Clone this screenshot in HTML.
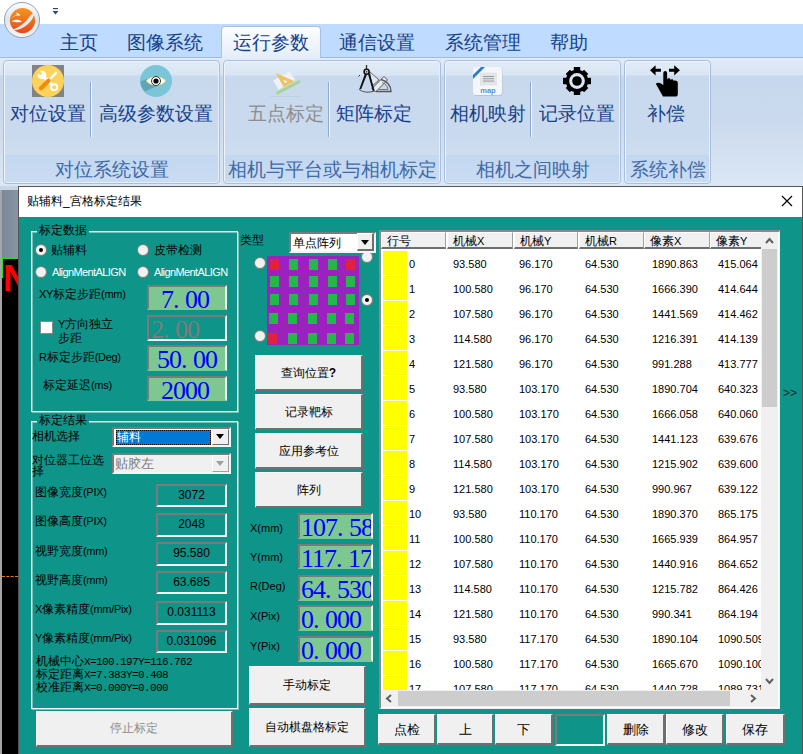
<!DOCTYPE html>
<html><head><meta charset="utf-8">
<style>
*{margin:0;padding:0;box-sizing:border-box}
html,body{width:803px;height:754px;overflow:hidden;background:#fff;font-family:"Liberation Sans",sans-serif}
.a{position:absolute}
.t{position:absolute;white-space:nowrap;line-height:1}
/* top */
#tabbar{left:0;top:24px;width:803px;height:34px;background:#bfdbff}
.tab{position:absolute;top:33px;font-size:19px;color:#15428b;line-height:20px}
#seltab{left:221px;top:26px;width:100px;height:32px;border:1px solid #a9c2e2;border-bottom:none;border-radius:4px 4px 0 0;background:linear-gradient(#fdfeff,#e4edf8)}
#ribbon{left:0;top:57px;width:803px;height:129px;background:linear-gradient(#e2ebf7 0,#d8e4f3 17px,#c6d7ed 18px,#cbdaee 50%,#dbe7f5 100%);border-top:1px solid #9fbbe0}
.grp{position:absolute;top:60px;height:124px;border:1px solid #a9c0dc;border-radius:4px;box-shadow:inset 1px 1px 0 #eef4fb,inset -1px -1px 0 #e6eef8;background:linear-gradient(#e3ecf8 0,#d9e5f4 14px,#c8d9ee 15px,#cadaee 60%,#d3e1f2 100%)}
.glab{position:absolute;left:1px;right:1px;bottom:1px;height:27px;background:linear-gradient(#c3d7f0,#c9dcf3);text-align:center;font-size:19px;line-height:30px;color:#3e6aa8;border-radius:0 0 3px 3px}
.rb{position:absolute;top:103px;font-size:19px;color:#15428b;line-height:22px}
.sep{position:absolute;top:82px;width:2px;height:55px;background:linear-gradient(90deg,#8da9d0 50%,#f4f8fd 50%)}
/* dialog */
#dlg{left:18px;top:186px;width:785px;height:570px;background:#0f9489;border:1px solid #555}
#dtitle{left:19px;top:187px;width:783px;height:30px;background:#fff}
.gbox{position:absolute;border:1px solid #f2f6f6;box-shadow:inset 1px 1px 0 #7fbdb6,1px 1px 0 #7fbdb6}
.lbl{position:absolute;font-size:12px;color:#000;line-height:13px;white-space:nowrap}
.radio{position:absolute;width:12px;height:12px;border-radius:50%;background:#f1f1f1;border:1px solid #7a7a7a}
.radio.on::after{content:"";position:absolute;left:3px;top:3px;width:4px;height:4px;border-radius:50%;background:#000}
.gtb{position:absolute;background:#7dc790;border-top:2px solid #7a7a7a;border-left:2px solid #7a7a7a;border-bottom:2px solid #f4f4f4;border-right:2px solid #f4f4f4;color:#0000ff;font-family:"Liberation Serif",serif;font-size:26px;line-height:25px;letter-spacing:-1px;overflow:hidden;white-space:nowrap}
.ttb{position:absolute;background:#0f9489;border-top:2px solid #7a7a7a;border-left:2px solid #7a7a7a;border-bottom:2px solid #f4f4f4;border-right:2px solid #f4f4f4;color:#000;font-size:12px;text-align:center;line-height:19px}
.n{font-size:11px;letter-spacing:-0.3px}
.m{font-family:"Liberation Mono",monospace;font-size:11px;letter-spacing:-0.6px}
.gtb i{font-style:normal;letter-spacing:5.5px}
.gtb.g{border-bottom-color:#7dc790}
.btn{position:absolute;background:#f0f0f0;border:1px solid #fff;border-right:2px solid #6f6f6f;border-bottom:2px solid #6f6f6f;font-size:12px;color:#000;text-align:center}
</style></head><body>
<!-- top white bar -->
<div class="a" id="tabbar"></div>
<div class="a" id="ribbon"></div>
<div class="a" id="seltab"></div>
<div class="tab" style="left:60px">主页</div>
<div class="tab" style="left:127px">图像系统</div>
<div class="tab" style="left:233px">运行参数</div>
<div class="tab" style="left:339px">通信设置</div>
<div class="tab" style="left:445px">系统管理</div>
<div class="tab" style="left:550px">帮助</div>

<div class="grp" style="left:3px;width:217px"><div class="glab">对位系统设置</div></div>
<div class="grp" style="left:223px;width:218px"><div class="glab">相机与平台或与相机标定</div></div>
<div class="grp" style="left:444px;width:177px"><div class="glab">相机之间映射</div></div>
<div class="grp" style="left:624px;width:87px"><div class="glab">系统补偿</div></div>

<div class="rb" style="left:10px">对位设置</div>
<div class="sep" style="left:90px"></div>
<div class="rb" style="left:99px">高级参数设置</div>
<div class="rb" style="left:248px;color:#8d8d8d">五点标定</div>
<div class="sep" style="left:328px"></div>
<div class="rb" style="left:336px">矩阵标定</div>
<div class="rb" style="left:450px">相机映射</div>
<div class="sep" style="left:530px"></div>
<div class="rb" style="left:539px">记录位置</div>
<div class="rb" style="left:647px">补偿</div>


<!-- orb -->
<svg class="a" style="left:0;top:0" width="44" height="42" viewBox="0 0 44 42">
<defs>
<linearGradient id="og" x1="0" y1="0" x2="0" y2="1"><stop offset="0" stop-color="#f7961e"/><stop offset="1" stop-color="#e5481c"/></linearGradient>
<linearGradient id="ring" x1="0" y1="0" x2="0" y2="1"><stop offset="0" stop-color="#fbfcfd"/><stop offset="0.5" stop-color="#dfe5ec"/><stop offset="1" stop-color="#f4f6f8"/></linearGradient>
</defs>
<circle cx="22" cy="20" r="17.6" fill="url(#ring)" stroke="#8796aa" stroke-width="0.9"/>
<circle cx="22.5" cy="20.6" r="12.6" fill="url(#og)"/>
<path d="M12.5 30 C19 27 24 24 28 18.5 C30 15.5 32 13.5 35 12.5 C34 16.5 31.5 21 28 24 C23.5 28 18 30.5 12.5 30Z" fill="#ececec"/>
<path d="M10.3 21 C11.5 17 15.5 14.8 20.5 15.8 C19.5 14 18 13 16 12.8 L17.2 14.8 C14 15.5 11.5 17.5 10.3 21Z" fill="#fff"/>
<path d="M11.5 21.2 C14.5 19.2 19 19 22 21.5 C20.5 22.5 15 22.5 11.5 21.2Z" fill="#fff"/>
</svg>
<svg class="a" style="left:52px;top:8px" width="8" height="8" viewBox="0 0 8 8"><rect x="1" y="0" width="5" height="1.2" fill="#2a4a7a"/><path d="M0.5 3 L6.5 3 L3.5 6.5Z" fill="#2a4a7a"/></svg>

<!-- wrench icon -->
<svg class="a" style="left:32px;top:65px" width="32" height="32" viewBox="0 0 32 32">
<rect width="32" height="32" fill="#838383"/>
<circle cx="16" cy="16" r="16" fill="#fdd35b"/>
<path d="M10.5 10.5 L21.5 21.5" stroke="#fff" stroke-width="3.2"/>
<circle cx="10" cy="10" r="4.3" fill="#fff"/>
<path d="M6.5 4.5 L10.2 8.2 L8.2 10.2 L4.5 6.5Z" fill="#fdd35b"/>
<circle cx="22.2" cy="22.2" r="3.9" fill="#fff"/>
<circle cx="22.2" cy="22.2" r="2" fill="#fdd35b"/>
<path d="M24.8 7.2 L16.5 15.5" stroke="#fff" stroke-width="2.4"/>
<path d="M16.5 15.8 L9 23.3" stroke="#f28a0e" stroke-width="4.2" stroke-linecap="round"/>
</svg>
<!-- eye icon -->
<svg class="a" style="left:140px;top:65px" width="32" height="32" viewBox="0 0 32 32">
<circle cx="16" cy="16" r="16" fill="#7bc5d9"/>
<path d="M0.5 16.5 L7 14 L16 21.5 L5 26.5 C2 23.5 0.5 20 0.5 16.5Z" fill="#5fa5b8"/>
<path d="M6.5 16 C10 10.5 22 10.5 25.5 16 C22 21.5 10 21.5 6.5 16Z" fill="#fff" stroke="#f0e860" stroke-width="0.8"/>
<circle cx="16" cy="16" r="4.5" fill="#fff" stroke="#333" stroke-width="1"/>
<circle cx="16" cy="16" r="2.6" fill="#000"/>
</svg>
<!-- triangle ruler (disabled) -->
<svg class="a" style="left:266px;top:64px" width="40" height="36" viewBox="0 0 40 36">
<path d="M7 16.4 L23.9 6.5 L29.4 15.9 L12.5 25.9Z" fill="#eef2f7" stroke="#d6dde6" stroke-width="0.6"/>
<path d="M9.7 9 L28.4 17.2 L17.7 22.9Z" fill="#ecc35e"/>
<path d="M17.2 15.7 L21.7 17.4 L18.9 19.2Z" fill="#eef2f7"/>
<path d="M11.5 28.9 L33.1 17.7" stroke="#a6d68c" stroke-width="2.8" stroke-linecap="round"/>
<path d="M4 32.4 L36 32.4" stroke="#b9c8da" stroke-width="0.8" opacity="0.6"/>
</svg>
<!-- compass -->
<svg class="a" style="left:355px;top:63px" width="40" height="32" viewBox="0 0 40 32">
<path d="M14.5 8.5 L24 17 L17 23Z" stroke="#666" stroke-width="1" fill="#dfe7f1"/>
<path d="M17 25.5 L29 13.5 L32.5 17 L20.5 29Z" stroke="#555" stroke-width="1" fill="#e6ecf3"/>
<path d="M21 28.5 L36 28.5 A 13 12 0 0 0 26 16.5" stroke="#555" stroke-width="1.4" fill="none"/>
<path d="M24 26.5 L33 26.5 A 9 8.5 0 0 0 27 19.5" stroke="#777" stroke-width="1" fill="none"/>
<path d="M11.5 2 L11.5 6" stroke="#333" stroke-width="1.3"/>
<path d="M10 10.5 L12.2 11 L6.2 26 L4.2 26.5Z" fill="#111"/>
<path d="M13 11 L14.8 10.5 L19.6 27.5 L17.8 28Z" fill="#111"/>
<path d="M4.2 26.5 Q 10 31 19.6 28" stroke="#555" stroke-width="1" fill="none"/>
<circle cx="11.6" cy="8.8" r="2.5" stroke="#111" stroke-width="1.6" fill="#fff"/>
<circle cx="11.6" cy="8.8" r="0.9" fill="#111"/>
<path d="M3.5 13.5 L5 12" stroke="#333" stroke-width="1"/>
</svg>
<!-- map icon -->
<svg class="a" style="left:472px;top:66px" width="32" height="31" viewBox="0 0 32 31">
<rect x="1.5" y="1.5" width="29" height="28.5" rx="3" fill="#b9c2cc"/>
<rect x="1" y="1" width="29" height="28" rx="3" fill="#f5f6f8"/>
<path d="M1 9 L9 1 L13 1 L1 13Z" fill="#2a7bd0"/>
<rect x="8" y="6.5" width="17" height="13" fill="#e3e5e8"/>
<rect x="11" y="10" width="11" height="0.9" fill="#8a9494"/>
<rect x="11" y="12.3" width="11" height="0.9" fill="#8a9494"/>
<rect x="11" y="14.6" width="11" height="0.9" fill="#8a9494"/>
<text x="16" y="26.5" font-size="7.5" fill="#5a8fdc" text-anchor="middle" font-family="Liberation Sans" font-weight="bold">map</text>
</svg>
<!-- gear -->
<svg class="a" style="left:562px;top:66px" width="30" height="30" viewBox="0 0 30 30">
<g fill="#000">
<circle cx="15" cy="15" r="11.2"/>
<rect x="11.8" y="1" width="6.4" height="28"/>
<rect x="1" y="11.8" width="28" height="6.4"/>
<rect x="12" y="2" width="6" height="26" transform="rotate(45 15 15)"/>
<rect x="12" y="2" width="6" height="26" transform="rotate(-45 15 15)"/>
</g>
<circle cx="15" cy="15" r="7.9" fill="#dbe5f2"/>
<circle cx="15" cy="15" r="4.8" fill="#000"/>
</svg>
<!-- hand -->
<svg class="a" style="left:649px;top:64px" width="32" height="34" viewBox="0 0 32 34">
<path d="M1 6.3 L6.6 1.3 L6.6 4.7 L11.9 4.7 L11.9 7.8 L6.6 7.8 L6.6 11.6Z" fill="#000"/>
<path d="M30.9 6.3 L25.2 1.3 L25.2 4.7 L20 4.7 L20 7.8 L25.2 7.8 L25.2 11.6Z" fill="#000"/>
<path d="M14.3 8.9 C14.3 6.2 18.1 6.2 18.1 8.9 L18.1 15.5 C18.6 14 21.2 13.8 21.4 15.8 C22 14.8 24.6 14.8 24.7 17 C25.3 16.2 28.8 16.3 28.8 19 L28.8 30.5 C28.8 31.8 27.8 32.6 26.3 32.6 L14 32.6 L6.8 19.8 C8.5 18 12 18.5 14.3 21.3 Z" fill="#000"/>
</svg>
<!-- dialog -->
<div class="a" id="dlg"></div>
<div class="a" id="dtitle"></div>
<div class="lbl" style="left:27px;top:195px">贴辅料_宫格标定结果</div>


<!-- left strip -->
<div class="a" style="left:0;top:186px;width:18px;height:568px;overflow:hidden;background:#c9d5e3">
<div class="a" style="left:0;top:4px;width:2px;height:564px;background:#a4a6a8"></div>
<div class="a" style="left:2px;top:4px;width:16px;height:68px;background:linear-gradient(90deg,#7b8897,#8795a4)"></div>
<div class="a" style="left:2px;top:72px;width:16px;height:496px;background:#000"></div>
<div class="a" style="left:2px;top:72px;width:16px;height:1px;background:#22e022"></div>
<div class="a" style="left:2px;top:72px;width:1px;height:20px;background:#22e022"></div>
<div class="t" style="left:3px;top:75px;font-size:36px;font-weight:bold;color:#f00">N</div>
<div class="a" style="left:2px;top:390px;width:16px;height:0;border-top:1px dashed #e07a10"></div>
</div>

<!-- group box 1 -->
<div class="gbox" style="left:31px;top:231px;width:207px;height:181px"></div>
<div class="lbl" style="left:37px;top:224px;background:#0f9489;padding:0 2px">标定数据</div>
<div class="radio on" style="left:35px;top:244px"></div>
<div class="lbl" style="left:51px;top:244px">贴辅料</div>
<div class="radio" style="left:137px;top:244px"></div>
<div class="lbl" style="left:154px;top:244px">皮带检测</div>
<div class="radio" style="left:35px;top:266px"></div>
<div class="lbl" style="left:52px;top:266px;color:#fff;font-size:11px;letter-spacing:-0.6px;width:74px;overflow:hidden">AlignMentALIGN</div>
<div class="radio" style="left:137px;top:266px"></div>
<div class="lbl" style="left:154px;top:266px;color:#fff;font-size:11px;letter-spacing:-0.6px;width:74px;overflow:hidden">AlignMentALIGN</div>
<div class="lbl" style="left:39px;top:288px"><span class="n">XY</span>标定步距<span class="n">(mm)</span></div>
<div class="gtb g" style="left:147px;top:285px;width:80px;height:25px;padding-left:12px">7<i>.</i>00</div>
<div class="a" style="left:40px;top:321px;width:13px;height:13px;background:#fff;border:1px solid #8a8a8a"></div>
<div class="lbl" style="left:58px;top:318px"><span class="n">Y</span>方向独立</div>
<div class="lbl" style="left:58px;top:332px">步距</div>
<div class="gtb" style="left:147px;top:315px;width:80px;height:26px;padding-left:2px;background:#0f9489;color:#7c7c7c">2<i>.</i>00</div>
<div class="lbl" style="left:39px;top:351px"><span class="n">R</span>标定步距<span class="n">(Deg)</span></div>
<div class="gtb g" style="left:147px;top:345px;width:80px;height:26px;padding-left:8px">50<i>.</i>00</div>
<div class="lbl" style="left:43px;top:379px">标定延迟<span class="n">(ms)</span></div>
<div class="gtb g" style="left:147px;top:376px;width:80px;height:25px;padding-left:12px">2000</div>

<!-- group box 2 -->
<div class="gbox" style="left:31px;top:421px;width:207px;height:288px"></div>
<div class="lbl" style="left:37px;top:414px;background:#0f9489;padding:0 2px">标定结果</div>
<div class="lbl" style="left:32px;top:430px">相机选择</div>
<div class="a" style="left:112px;top:427px;width:119px;height:20px;background:#fff;border-top:2px solid #7a7a7a;border-left:2px solid #7a7a7a;border-bottom:2px solid #f4f4f4;border-right:2px solid #f4f4f4"></div>
<div class="a" style="left:116px;top:430px;width:95px;height:15px;background:#0078d7;border:1px dotted #000"></div>
<div class="lbl" style="left:117px;top:431px;color:#fff">辅料</div>
<div class="a" style="left:212px;top:429px;width:17px;height:16px;background:#f0f0f0;border:1px solid #fff;border-right:1px solid #6f6f6f;border-bottom:1px solid #6f6f6f"></div>
<div class="t" style="left:216px;top:434px;width:0;height:0;border-left:4px solid transparent;border-right:4px solid transparent;border-top:5px solid #000"></div>
<div class="lbl" style="left:32px;top:454px">对位器工位选</div>
<div class="lbl" style="left:32px;top:466px;line-height:11px">择</div>
<div class="a" style="left:112px;top:453px;width:119px;height:21px;background:#f0f0f0;border-top:2px solid #7a7a7a;border-left:2px solid #7a7a7a;border-bottom:2px solid #f4f4f4;border-right:2px solid #f4f4f4"></div>
<div class="lbl" style="left:115px;top:457px;color:#7a7a7a;font-size:13px">贴胶左</div>
<div class="a" style="left:212px;top:455px;width:17px;height:17px;background:#f0f0f0;border:1px solid #fff;border-right:1px solid #a0a0a0;border-bottom:1px solid #a0a0a0"></div>
<div class="t" style="left:216px;top:461px;width:0;height:0;border-left:4px solid transparent;border-right:4px solid transparent;border-top:5px solid #a0a0a0"></div>

<div class="lbl" style="left:35px;top:486px">图像宽度<span class="n">(PIX)</span></div>
<div class="ttb" style="left:156px;top:484px;width:71px;height:23px">3072</div>
<div class="lbl" style="left:35px;top:515px">图像高度<span class="n">(PIX)</span></div>
<div class="ttb" style="left:156px;top:513px;width:71px;height:24px">2048</div>
<div class="lbl" style="left:35px;top:545px">视野宽度<span class="n">(mm)</span></div>
<div class="ttb" style="left:156px;top:542px;width:71px;height:24px">95.580</div>
<div class="lbl" style="left:35px;top:574px">视野高度<span class="n">(mm)</span></div>
<div class="ttb" style="left:156px;top:571px;width:71px;height:23px">63.685</div>
<div class="lbl" style="left:35px;top:603px"><span class="n">X</span>像素精度<span class="n">(mm/Pix)</span></div>
<div class="ttb" style="left:156px;top:601px;width:71px;height:24px">0.031113</div>
<div class="lbl" style="left:35px;top:632px"><span class="n">Y</span>像素精度<span class="n">(mm/Pix)</span></div>
<div class="ttb" style="left:156px;top:630px;width:71px;height:23px">0.031096</div>
<div class="lbl" style="left:36px;top:655px;font-size:12px">机械中心<span class="m">X=100.197Y=116.762</span></div>
<div class="lbl" style="left:36px;top:668px;font-size:12px">标定距离<span class="m">X=7.383Y=0.408</span></div>
<div class="lbl" style="left:36px;top:681px;font-size:12px">校准距离<span class="m">X=0.000Y=0.000</span></div>
<div class="btn" style="left:36px;top:711px;width:197px;height:36px;color:#8c8c8c;line-height:33px">停止标定</div>


<!-- center column -->
<div class="radio" style="left:361px;top:251px"></div>
<div class="lbl" style="left:240px;top:234px">类型</div>
<div class="a" style="left:289px;top:232px;width:87px;height:21px;background:#fff;border-top:2px solid #7a7a7a;border-left:2px solid #7a7a7a;border-bottom:2px solid #f4f4f4;border-right:2px solid #f4f4f4"></div>
<div class="lbl" style="left:293px;top:237px;font-size:12px">单点阵列</div>
<div class="a" style="left:357px;top:233px;width:17px;height:18px;background:#f0f0f0;border:1px solid #fff;border-right:2px solid #6f6f6f;border-bottom:2px solid #6f6f6f"></div>
<div class="t" style="left:361px;top:240px;width:0;height:0;border-left:4px solid transparent;border-right:4px solid transparent;border-top:5px solid #000"></div>
<div class="a" style="left:267px;top:256px;width:92px;height:89px;background:#9b22bf"></div>
<div class="a" style="left:270px;top:259px;width:9px;height:11px;background:#e0213f"></div><div class="a" style="left:289px;top:259px;width:9px;height:11px;background:#22b84a"></div><div class="a" style="left:309px;top:259px;width:9px;height:11px;background:#22b84a"></div><div class="a" style="left:328px;top:259px;width:9px;height:11px;background:#22b84a"></div><div class="a" style="left:346px;top:259px;width:9px;height:11px;background:#e0213f"></div><div class="a" style="left:270px;top:276px;width:9px;height:11px;background:#22b84a"></div><div class="a" style="left:289px;top:276px;width:9px;height:11px;background:#22b84a"></div><div class="a" style="left:309px;top:276px;width:9px;height:11px;background:#22b84a"></div><div class="a" style="left:328px;top:276px;width:9px;height:11px;background:#22b84a"></div><div class="a" style="left:346px;top:276px;width:9px;height:11px;background:#22b84a"></div><div class="a" style="left:270px;top:294px;width:9px;height:11px;background:#22b84a"></div><div class="a" style="left:289px;top:294px;width:9px;height:11px;background:#22b84a"></div><div class="a" style="left:309px;top:294px;width:9px;height:11px;background:#22b84a"></div><div class="a" style="left:328px;top:294px;width:9px;height:11px;background:#22b84a"></div><div class="a" style="left:346px;top:294px;width:9px;height:11px;background:#22b84a"></div><div class="a" style="left:269px;top:313px;width:9px;height:11px;background:#22b84a"></div><div class="a" style="left:288px;top:313px;width:9px;height:11px;background:#22b84a"></div><div class="a" style="left:308px;top:313px;width:9px;height:11px;background:#22b84a"></div><div class="a" style="left:327px;top:313px;width:9px;height:11px;background:#22b84a"></div><div class="a" style="left:345px;top:313px;width:9px;height:11px;background:#22b84a"></div><div class="a" style="left:268px;top:333px;width:9px;height:11px;background:#e0213f"></div><div class="a" style="left:288px;top:333px;width:9px;height:11px;background:#22b84a"></div><div class="a" style="left:308px;top:333px;width:9px;height:11px;background:#22b84a"></div><div class="a" style="left:327px;top:333px;width:9px;height:11px;background:#22b84a"></div><div class="a" style="left:345px;top:333px;width:9px;height:11px;background:#22b84a"></div>
<div class="radio" style="left:254px;top:257px"></div>
<div class="radio" style="left:254px;top:330px"></div>
<div class="radio on" style="left:361px;top:294px"></div>

<div class="btn" style="left:255px;top:355px;width:108px;height:36px;line-height:35px">查询位置<b>?</b></div>
<div class="btn" style="left:255px;top:394px;width:108px;height:36px;line-height:35px">记录靶标</div>
<div class="btn" style="left:255px;top:433px;width:108px;height:36px;line-height:35px">应用参考位</div>
<div class="btn" style="left:255px;top:472px;width:108px;height:36px;line-height:35px">阵列</div>

<div class="lbl" style="left:250px;top:522px;font-size:11px">X(mm)</div>
<div class="gtb g" style="left:298px;top:513px;width:75px;height:26px;padding-left:1px">107<i>.</i>58</div>
<div class="lbl" style="left:250px;top:551px;font-size:11px">Y(mm)</div>
<div class="gtb g" style="left:298px;top:544px;width:75px;height:25px;padding-left:1px">117<i>.</i>17</div>
<div class="lbl" style="left:250px;top:580px;font-size:11px">R(Deg)</div>
<div class="gtb g" style="left:298px;top:575px;width:75px;height:26px;padding-left:1px">64<i>.</i>530</div>
<div class="lbl" style="left:250px;top:610px;font-size:11px">X(Pix)</div>
<div class="gtb g" style="left:298px;top:605px;width:75px;height:26px;padding-left:1px">0<i>.</i>000</div>
<div class="lbl" style="left:250px;top:640px;font-size:11px">Y(Pix)</div>
<div class="gtb g" style="left:298px;top:636px;width:75px;height:26px;padding-left:1px">0<i>.</i>000</div>
<div class="btn" style="left:249px;top:666px;width:117px;height:39px;line-height:37px">手动标定</div>
<div class="btn" style="left:249px;top:708px;width:117px;height:39px;line-height:37px">自动棋盘格标定</div>

<!-- table -->
<div class="a" style="left:379px;top:230px;width:401px;height:479px;background:#fff;border-top:2px solid #8a8a8a;border-left:2px solid #8a8a8a;border-bottom:1px solid #f0f0f0;border-right:1px solid #f0f0f0"></div>
<div class="a" style="left:381px;top:232px;width:380px;height:458px;overflow:hidden">
<div class="a" style="left:0px;top:0;width:65px;height:17px;background:#f0f0f0;border:1px solid #fff;border-right:1px solid #a0a0a0;border-bottom:2px solid #6e6e6e"></div><div class="lbl" style="left:6px;top:3px">行号</div><div class="a" style="left:66px;top:0;width:66px;height:17px;background:#f0f0f0;border:1px solid #fff;border-right:1px solid #a0a0a0;border-bottom:2px solid #6e6e6e"></div><div class="lbl" style="left:72px;top:3px">机械<span class="n">X</span></div><div class="a" style="left:133px;top:0;width:64px;height:17px;background:#f0f0f0;border:1px solid #fff;border-right:1px solid #a0a0a0;border-bottom:2px solid #6e6e6e"></div><div class="lbl" style="left:139px;top:3px">机械<span class="n">Y</span></div><div class="a" style="left:198px;top:0;width:65px;height:17px;background:#f0f0f0;border:1px solid #fff;border-right:1px solid #a0a0a0;border-bottom:2px solid #6e6e6e"></div><div class="lbl" style="left:204px;top:3px">机械<span class="n">R</span></div><div class="a" style="left:263px;top:0;width:66px;height:17px;background:#f0f0f0;border:1px solid #fff;border-right:1px solid #a0a0a0;border-bottom:2px solid #6e6e6e"></div><div class="lbl" style="left:269px;top:3px">像素<span class="n">X</span></div><div class="a" style="left:329px;top:0;width:66px;height:17px;background:#f0f0f0;border:1px solid #fff;border-right:1px solid #a0a0a0;border-bottom:2px solid #6e6e6e"></div><div class="lbl" style="left:335px;top:3px">像素<span class="n">Y</span></div><div class="a" style="left:2px;top:19px;width:24px;height:24px;background:#ff0"></div><div class="lbl" style="left:28px;top:26px;font-size:11px">0</div><div class="lbl" style="left:72px;top:26px;font-size:11px">93.580</div><div class="lbl" style="left:138px;top:26px;font-size:11px">96.170</div><div class="lbl" style="left:204px;top:26px;font-size:11px">64.530</div><div class="lbl" style="left:271px;top:26px;font-size:11px">1890.863</div><div class="lbl" style="left:337px;top:26px;font-size:11px">415.064</div><div class="a" style="left:2px;top:44px;width:24px;height:24px;background:#ff0"></div><div class="lbl" style="left:28px;top:51px;font-size:11px">1</div><div class="lbl" style="left:72px;top:51px;font-size:11px">100.580</div><div class="lbl" style="left:138px;top:51px;font-size:11px">96.170</div><div class="lbl" style="left:204px;top:51px;font-size:11px">64.530</div><div class="lbl" style="left:271px;top:51px;font-size:11px">1666.390</div><div class="lbl" style="left:337px;top:51px;font-size:11px">414.644</div><div class="a" style="left:2px;top:69px;width:24px;height:24px;background:#ff0"></div><div class="lbl" style="left:28px;top:76px;font-size:11px">2</div><div class="lbl" style="left:72px;top:76px;font-size:11px">107.580</div><div class="lbl" style="left:138px;top:76px;font-size:11px">96.170</div><div class="lbl" style="left:204px;top:76px;font-size:11px">64.530</div><div class="lbl" style="left:271px;top:76px;font-size:11px">1441.569</div><div class="lbl" style="left:337px;top:76px;font-size:11px">414.462</div><div class="a" style="left:2px;top:94px;width:24px;height:24px;background:#ff0"></div><div class="lbl" style="left:28px;top:101px;font-size:11px">3</div><div class="lbl" style="left:72px;top:101px;font-size:11px">114.580</div><div class="lbl" style="left:138px;top:101px;font-size:11px">96.170</div><div class="lbl" style="left:204px;top:101px;font-size:11px">64.530</div><div class="lbl" style="left:271px;top:101px;font-size:11px">1216.391</div><div class="lbl" style="left:337px;top:101px;font-size:11px">414.139</div><div class="a" style="left:2px;top:119px;width:24px;height:24px;background:#ff0"></div><div class="lbl" style="left:28px;top:126px;font-size:11px">4</div><div class="lbl" style="left:72px;top:126px;font-size:11px">121.580</div><div class="lbl" style="left:138px;top:126px;font-size:11px">96.170</div><div class="lbl" style="left:204px;top:126px;font-size:11px">64.530</div><div class="lbl" style="left:271px;top:126px;font-size:11px">991.288</div><div class="lbl" style="left:337px;top:126px;font-size:11px">413.777</div><div class="a" style="left:2px;top:144px;width:24px;height:24px;background:#ff0"></div><div class="lbl" style="left:28px;top:151px;font-size:11px">5</div><div class="lbl" style="left:72px;top:151px;font-size:11px">93.580</div><div class="lbl" style="left:138px;top:151px;font-size:11px">103.170</div><div class="lbl" style="left:204px;top:151px;font-size:11px">64.530</div><div class="lbl" style="left:271px;top:151px;font-size:11px">1890.704</div><div class="lbl" style="left:337px;top:151px;font-size:11px">640.323</div><div class="a" style="left:2px;top:169px;width:24px;height:24px;background:#ff0"></div><div class="lbl" style="left:28px;top:176px;font-size:11px">6</div><div class="lbl" style="left:72px;top:176px;font-size:11px">100.580</div><div class="lbl" style="left:138px;top:176px;font-size:11px">103.170</div><div class="lbl" style="left:204px;top:176px;font-size:11px">64.530</div><div class="lbl" style="left:271px;top:176px;font-size:11px">1666.058</div><div class="lbl" style="left:337px;top:176px;font-size:11px">640.060</div><div class="a" style="left:2px;top:194px;width:24px;height:24px;background:#ff0"></div><div class="lbl" style="left:28px;top:201px;font-size:11px">7</div><div class="lbl" style="left:72px;top:201px;font-size:11px">107.580</div><div class="lbl" style="left:138px;top:201px;font-size:11px">103.170</div><div class="lbl" style="left:204px;top:201px;font-size:11px">64.530</div><div class="lbl" style="left:271px;top:201px;font-size:11px">1441.123</div><div class="lbl" style="left:337px;top:201px;font-size:11px">639.676</div><div class="a" style="left:2px;top:219px;width:24px;height:24px;background:#ff0"></div><div class="lbl" style="left:28px;top:226px;font-size:11px">8</div><div class="lbl" style="left:72px;top:226px;font-size:11px">114.580</div><div class="lbl" style="left:138px;top:226px;font-size:11px">103.170</div><div class="lbl" style="left:204px;top:226px;font-size:11px">64.530</div><div class="lbl" style="left:271px;top:226px;font-size:11px">1215.902</div><div class="lbl" style="left:337px;top:226px;font-size:11px">639.600</div><div class="a" style="left:2px;top:244px;width:24px;height:24px;background:#ff0"></div><div class="lbl" style="left:28px;top:251px;font-size:11px">9</div><div class="lbl" style="left:72px;top:251px;font-size:11px">121.580</div><div class="lbl" style="left:138px;top:251px;font-size:11px">103.170</div><div class="lbl" style="left:204px;top:251px;font-size:11px">64.530</div><div class="lbl" style="left:271px;top:251px;font-size:11px">990.967</div><div class="lbl" style="left:337px;top:251px;font-size:11px">639.122</div><div class="a" style="left:2px;top:269px;width:24px;height:24px;background:#ff0"></div><div class="lbl" style="left:28px;top:276px;font-size:11px">10</div><div class="lbl" style="left:72px;top:276px;font-size:11px">93.580</div><div class="lbl" style="left:138px;top:276px;font-size:11px">110.170</div><div class="lbl" style="left:204px;top:276px;font-size:11px">64.530</div><div class="lbl" style="left:271px;top:276px;font-size:11px">1890.370</div><div class="lbl" style="left:337px;top:276px;font-size:11px">865.175</div><div class="a" style="left:2px;top:294px;width:24px;height:24px;background:#ff0"></div><div class="lbl" style="left:28px;top:301px;font-size:11px">11</div><div class="lbl" style="left:72px;top:301px;font-size:11px">100.580</div><div class="lbl" style="left:138px;top:301px;font-size:11px">110.170</div><div class="lbl" style="left:204px;top:301px;font-size:11px">64.530</div><div class="lbl" style="left:271px;top:301px;font-size:11px">1665.939</div><div class="lbl" style="left:337px;top:301px;font-size:11px">864.957</div><div class="a" style="left:2px;top:319px;width:24px;height:24px;background:#ff0"></div><div class="lbl" style="left:28px;top:326px;font-size:11px">12</div><div class="lbl" style="left:72px;top:326px;font-size:11px">107.580</div><div class="lbl" style="left:138px;top:326px;font-size:11px">110.170</div><div class="lbl" style="left:204px;top:326px;font-size:11px">64.530</div><div class="lbl" style="left:271px;top:326px;font-size:11px">1440.916</div><div class="lbl" style="left:337px;top:326px;font-size:11px">864.652</div><div class="a" style="left:2px;top:344px;width:24px;height:24px;background:#ff0"></div><div class="lbl" style="left:28px;top:351px;font-size:11px">13</div><div class="lbl" style="left:72px;top:351px;font-size:11px">114.580</div><div class="lbl" style="left:138px;top:351px;font-size:11px">110.170</div><div class="lbl" style="left:204px;top:351px;font-size:11px">64.530</div><div class="lbl" style="left:271px;top:351px;font-size:11px">1215.782</div><div class="lbl" style="left:337px;top:351px;font-size:11px">864.426</div><div class="a" style="left:2px;top:369px;width:24px;height:24px;background:#ff0"></div><div class="lbl" style="left:28px;top:376px;font-size:11px">14</div><div class="lbl" style="left:72px;top:376px;font-size:11px">121.580</div><div class="lbl" style="left:138px;top:376px;font-size:11px">110.170</div><div class="lbl" style="left:204px;top:376px;font-size:11px">64.530</div><div class="lbl" style="left:271px;top:376px;font-size:11px">990.341</div><div class="lbl" style="left:337px;top:376px;font-size:11px">864.194</div><div class="a" style="left:2px;top:394px;width:24px;height:24px;background:#ff0"></div><div class="lbl" style="left:28px;top:401px;font-size:11px">15</div><div class="lbl" style="left:72px;top:401px;font-size:11px">93.580</div><div class="lbl" style="left:138px;top:401px;font-size:11px">117.170</div><div class="lbl" style="left:204px;top:401px;font-size:11px">64.530</div><div class="lbl" style="left:271px;top:401px;font-size:11px">1890.104</div><div class="lbl" style="left:337px;top:401px;font-size:11px">1090.509</div><div class="a" style="left:2px;top:419px;width:24px;height:24px;background:#ff0"></div><div class="lbl" style="left:28px;top:426px;font-size:11px">16</div><div class="lbl" style="left:72px;top:426px;font-size:11px">100.580</div><div class="lbl" style="left:138px;top:426px;font-size:11px">117.170</div><div class="lbl" style="left:204px;top:426px;font-size:11px">64.530</div><div class="lbl" style="left:271px;top:426px;font-size:11px">1665.670</div><div class="lbl" style="left:337px;top:426px;font-size:11px">1090.100</div><div class="a" style="left:2px;top:444px;width:24px;height:24px;background:#ff0"></div><div class="lbl" style="left:28px;top:451px;font-size:11px">17</div><div class="lbl" style="left:72px;top:451px;font-size:11px">107.580</div><div class="lbl" style="left:138px;top:451px;font-size:11px">117.170</div><div class="lbl" style="left:204px;top:451px;font-size:11px">64.530</div><div class="lbl" style="left:271px;top:451px;font-size:11px">1440.728</div><div class="lbl" style="left:337px;top:451px;font-size:11px">1089.731</div></div>
<div class="a" style="left:761px;top:232px;width:17px;height:458px;background:#f0f0f0"></div>
<div class="a" style="left:762px;top:249px;width:15px;height:158px;background:#cdcdcd"></div>
<svg class="a" style="left:764px;top:236px" width="11" height="9"><path d="M2 7L5.5 3L9 7" stroke="#606060" stroke-width="2" fill="none"/></svg>
<svg class="a" style="left:764px;top:677px" width="11" height="9"><path d="M2 2L5.5 6L9 2" stroke="#606060" stroke-width="2" fill="none"/></svg>
<div class="a" style="left:381px;top:690px;width:380px;height:17px;background:#f0f0f0"></div>
<div class="a" style="left:398px;top:691px;width:332px;height:15px;background:#cdcdcd"></div>
<svg class="a" style="left:384px;top:693px" width="9" height="11"><path d="M7 2L3 5.5L7 9" stroke="#606060" stroke-width="2" fill="none"/></svg>
<svg class="a" style="left:749px;top:693px" width="9" height="11"><path d="M2 2L6 5.5L2 9" stroke="#606060" stroke-width="2" fill="none"/></svg>
<div class="a" style="left:761px;top:690px;width:17px;height:17px;background:#f0f0f0"></div>
<div class="lbl" style="left:783px;top:387px;font-size:12px;color:#1c2a2a">&gt;&gt;</div>

<!-- bottom buttons -->
<div class="btn" style="left:378px;top:714px;width:58px;height:31px;line-height:29px;font-size:13px">点检</div>
<div class="btn" style="left:437px;top:714px;width:57px;height:31px;line-height:29px;font-size:13px">上</div>
<div class="btn" style="left:495px;top:714px;width:58px;height:31px;line-height:29px;font-size:13px">下</div>
<div class="a" style="left:555px;top:714px;width:50px;height:32px;background:#0f9489;border-top:2px solid #7a7a7a;border-left:2px solid #7a7a7a;border-bottom:2px solid #f4f4f4;border-right:2px solid #f4f4f4"></div>
<div class="btn" style="left:607px;top:714px;width:58px;height:31px;line-height:29px;font-size:13px">删除</div>
<div class="btn" style="left:666px;top:714px;width:58px;height:31px;line-height:29px;font-size:13px">修改</div>
<div class="btn" style="left:726px;top:714px;width:59px;height:31px;line-height:29px;font-size:13px">保存</div>

<!-- close X -->
<svg class="a" style="left:780px;top:194px" width="14" height="14"><path d="M2 2L12 12M12 2L2 12" stroke="#000" stroke-width="1.2"/></svg>

</body></html>
